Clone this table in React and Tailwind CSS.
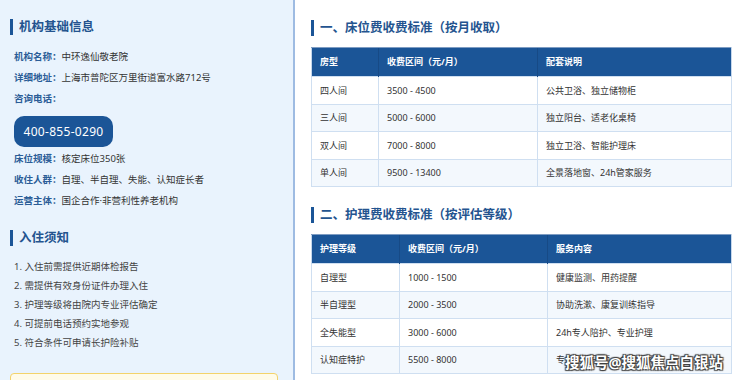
import React from 'react';

const FONT = { fontFamily: '"Noto Sans", "Noto Sans CJK SC", sans-serif' };

const infoRows = [
  ['机构名称：', '中环逸仙敬老院'],
  ['详细地址：', '上海市普陀区万里街道富水路712号'],
  ['咨询电话：', ''],
];

const infoRows2 = [
  ['床位规模：', '核定床位350张'],
  ['收住人群：', '自理、半自理、失能、认知症长者'],
  ['运营主体：', '国企合作·非营利性养老机构'],
];

const notices = [
  '1. 入住前需提供近期体检报告',
  '2. 需提供有效身份证件办理入住',
  '3. 护理等级将由院内专业评估确定',
  '4. 可提前电话预约实地参观',
  '5. 符合条件可申请长护险补贴',
];

const bedTable = {
  cols: ['w-[67px]', 'w-[159px]', 'w-[194px]'],
  head: ['房型', '收费区间（元/月）', '配套说明'],
  rows: [
    ['四人间', '3500 - 4500', '公共卫浴、独立储物柜'],
    ['三人间', '5000 - 6000', '独立阳台、适老化桌椅'],
    ['双人间', '7000 - 8000', '独立卫浴、智能护理床'],
    ['单人间', '9500 - 13400', '全景落地窗、24h管家服务'],
  ],
};

const careTable = {
  cols: ['w-[88px]', 'w-[148px]', 'w-[184px]'],
  head: ['护理等级', '收费区间（元/月）', '服务内容'],
  rows: [
    ['自理型', '1000 - 1500', '健康监测、用药提醒'],
    ['半自理型', '2000 - 3500', '协助洗漱、康复训练指导'],
    ['全失能型', '3000 - 6000', '24h专人陪护、专业护理'],
    ['认知症特护', '5500 - 8000', '专业认知干预、个性化照护'],
  ],
};

const SectionTitle = ({ children, className = '' }) => (
  <div className={`flex items-center h-[16px] ${className}`}>
    <span className="w-[3px] h-[16px] bg-[#1b5597]" />
    <h2 className="ml-[6px] text-[12.5px] font-bold leading-[16px] text-[#24548f]">{children}</h2>
  </div>
);

const PriceTable = ({ data }) => (
  <table className="w-[420px] table-fixed border-collapse text-[9px]">
    <colgroup>
      {data.cols.map((c, i) => (
        <col key={i} className={c} />
      ))}
    </colgroup>
    <thead>
      <tr className="h-[29px] bg-[#1b5597] text-white">
        {data.head.map((h, i) => (
          <th
            key={i}
            className="px-[8px] text-left font-bold border-t border-t-[#7e9cc2] border-l border-l-[#174a86] first:border-l-[#c5d7ec] last:border-r last:border-r-[#c5d7ec]"
          >
            {h}
          </th>
        ))}
      </tr>
    </thead>
    <tbody>
      {data.rows.map((r, i) => (
        <tr key={i} className={`h-[27.5px] ${i % 2 === 1 ? 'bg-[#f3f8fd]' : 'bg-white'}`}>
          {r.map((c, j) => (
            <td key={j} className="px-[8px] text-[#333] border border-[#cfdff1] whitespace-nowrap overflow-hidden">
              {c}
            </td>
          ))}
        </tr>
      ))}
    </tbody>
  </table>
);

const InfoRow = ({ label, value }) => (
  <div className="leading-[21px] text-[9.5px] pl-[4px]">
    <span className="font-semibold text-[#2b5d97]">{label}</span>
    <span className="text-[#333]">{value}</span>
  </div>
);

export default function App() {
  return (
    <div className="relative flex h-[380px] overflow-hidden bg-white" style={FONT}>
      {/* Left info panel */}
      <aside className="w-[295px] shrink-0 bg-[#e9f3fd] border-r-2 border-[#9ebbe2] pl-[10px] pr-[15px] pt-[19px]">
        <SectionTitle>机构基础信息</SectionTitle>
        <div className="mt-[11px]">
          {infoRows.map(([l, v]) => (
            <InfoRow key={l} label={l} value={v} />
          ))}
        </div>
        <div className="mt-[7px] ml-[4px] w-[99px] h-[31px] rounded-[10px] bg-[#1b5597] flex items-center justify-center text-white text-[12px] tracking-[0.3px]">
          400-855-0290
        </div>
        <div className="mt-[1px]">
          {infoRows2.map(([l, v]) => (
            <InfoRow key={l} label={l} value={v} />
          ))}
        </div>

        <SectionTitle className="mt-[19px]">入住须知</SectionTitle>
        <ul className="mt-[11px] pl-[4px]">
          {notices.map((n) => (
            <li key={n} className="leading-[19px] text-[9.5px] text-[#444]">
              {n}
            </li>
          ))}
        </ul>

        {/* Tip box, mostly below the fold */}
        <div className="mt-[21px] w-[268px] rounded-[4px] border border-[#f3d36b] bg-[#fffbe9] px-3 pt-[16px] pb-3 text-[10px] text-[#8a6d1c]">
          温馨提示：以上价格仅供参考，具体以院方实际报价为准。
        </div>
      </aside>

      {/* Right price panel */}
      <main className="flex-1 pl-[16px] pr-[9px] pt-[20px]">
        <SectionTitle>一、床位费收费标准（按月收取）</SectionTitle>
        <div className="mt-[11px]">
          <PriceTable data={bedTable} />
        </div>

        <SectionTitle className="mt-[20px]">二、护理费收费标准（按评估等级）</SectionTitle>
        <div className="mt-[11px]">
          <PriceTable data={careTable} />
        </div>
      </main>

      {/* Watermark */}
      <div
        className="absolute left-[565px] top-[352px] text-[14.5px] leading-[20px] text-white font-bold"
        style={{ textShadow: '0 0 1px #333, 1px 1px 1px #444, -1px -1px 1px #444, 1px -1px 1px #444, -1px 1px 1px #444' }}
      >
        搜狐号@搜狐焦点白银站
      </div>
    </div>
  );
}
